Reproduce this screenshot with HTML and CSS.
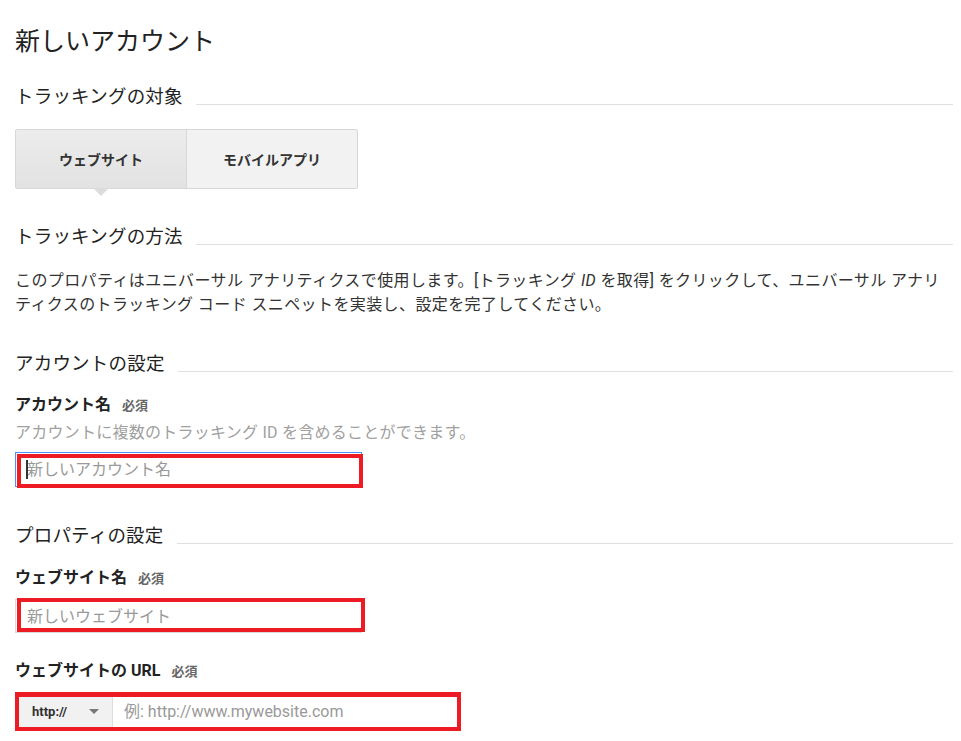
FILE: index.html
```html
<!DOCTYPE html>
<html lang="ja">

<head>
  <meta charset="UTF-8">
  <title>新しいアカウント</title>
  <link rel="stylesheet" href="styles.css">
</head>

<body>
  <div class='page'>
    <h1 class='title'>新しいアカウント</h1>

    <h2 class='section'>トラッキングの対象</h2>
    <div class='toggle'>
      <div class='opt active'>ウェブサイト</div>
      <div class='opt'>モバイルアプリ</div>
    </div>

    <h2 class='section gap-lg'>トラッキングの方法</h2>
    <p class='desc'>このプロパティはユニバーサル アナリティクスで使用します。[トラッキング <i>ID</i> を取得] をクリックして、ユニバーサル アナリティクスのトラッキング コード スニペットを実装し、設定を完了してください。</p>

    <h2 class='section gap-md'>アカウントの設定</h2>
    <div class='label'>アカウント名 <span class='req'>必須</span></div>
    <div class='hint'>アカウントに複数のトラッキング ID を含めることができます。</div>
    <div class='field first'>
      <input class='text focus' type='text' placeholder='新しいアカウント名'>
      <span class='caret'></span>
      <span class='mark m1'></span>
    </div>

    <h2 class='section gap-xl'>プロパティの設定</h2>
    <div class='label near'>ウェブサイト名 <span class='req'>必須</span></div>
    <div class='field second'>
      <input class='text' type='text' placeholder='新しいウェブサイト'>
      <span class='mark m2'></span>
    </div>

    <div class='label url-label'>ウェブサイトの URL <span class='req'>必須</span></div>
    <div class='url'>
      <div class='proto'>http:// <span class='arrow'></span></div>
      <input class='url-input' type='text' placeholder='例: http://www.mywebsite.com'>
      <span class='mark m3'></span>
    </div>
  </div>
</body>
</html>
```

FILE: styles.css
```css
body {
  margin: 0;
  background: #fff;
  font-family: Roboto, "Noto Sans CJK JP", sans-serif;
  color: #222;
}
.page {
  padding: 27px 8px 0 15px;
}
.title {
  margin: 0;
  font-size: 25px;
  font-weight: normal;
  line-height: 30px;
}
.section {
  display: flex;
  margin: 28px 0 0;
  font-size: 18.5px;
  font-weight: normal;
  line-height: 24px;
  letter-spacing: 0.2px;
  color: #222;
}
.section::after {
  content: '';
  flex: 1;
  height: 1px;
  margin: 0 0 4px 13px;
  align-self: flex-end;
  background: #e0e0e0;
}
.gap-lg { margin-top: 36px; }
.gap-md { margin-top: 35px; }
.gap-xl { margin-top: 37px; }

/* website / app switch */
.toggle {
  display: flex;
  width: 341px;
  height: 58px;
  margin-top: 20px;
  border: 1px solid #d8d8d8;
  border-radius: 2px;
  background: #f2f2f2;
}
.opt {
  flex: 1;
  display: flex;
  align-items: center;
  justify-content: center;
  font-size: 14px;
  font-weight: bold;
  color: #333;
}
.opt.active {
  position: relative;
  border-right: 1px solid #d8d8d8;
  background: linear-gradient(#ececec, #e2e2e2);
}
.opt.active::after {
  content: '';
  position: absolute;
  left: 50%;
  bottom: -8px;
  margin-left: -8px;
  border-left: 8px solid transparent;
  border-right: 8px solid transparent;
  border-top: 8px solid #dcdcdc;
}

.desc {
  margin: 20px 0 0;
  font-size: 16px;
  line-height: 24px;
  letter-spacing: 0.4px;
  color: #333;
}
.desc i { font-style: italic; }

.label {
  margin-top: 19px;
  font-size: 16px;
  font-weight: bold;
  line-height: 20px;
  color: #222;
}
.label.near { margin-top: 20px; }
.req {
  margin-left: 7px;
  font-size: 13px;
  color: #666;
}
.hint {
  margin-top: 5px;
  font-size: 16px;
  line-height: 24px;
  letter-spacing: 0.25px;
  color: #a0a0a0;
}
.field {
  position: relative;
  width: 347px;
}
.field.first { margin-top: 7px; }
.field.second { margin-top: 10px; }
.text {
  display: block;
  box-sizing: border-box;
  width: 100%;
  height: 34px;
  padding: 0 0 0 11px;
  border: 1px solid #d9d9d9;
  font-family: inherit;
  font-size: 16px;
  color: #222;
  outline: none;
}
.text.focus {
  height: 35px;
  border-color: #4d90fe;
}
.text::placeholder, .url-input::placeholder { color: #999; }
.caret {
  position: absolute;
  left: 11px;
  top: 8px;
  width: 2px;
  height: 19px;
  background: #333;
}

/* annotation boxes drawn over the fields */
.mark {
  position: absolute;
  border: 4px solid #ed1c24;
  pointer-events: none;
}
.m1 { left: 2px; top: 2px; right: -1px; bottom: -1px; }
.m2 { left: 2px; top: -1px; right: -3px; bottom: 1px; }
.m3 { left: 0; top: 0; right: 0; bottom: 0; border-width: 5px 4px 4px 4px; }

.url-label { margin-top: 28px; }
.url {
  position: relative;
  display: flex;
  width: 446px;
  height: 39px;
  margin-top: 10px;
}
.proto {
  display: flex;
  align-items: center;
  width: 80px;
  margin: 4px 0 4px 4px;
  padding-left: 13px;
  border-right: 1px solid #ddd;
  background: #f1f1f1;
  font-size: 13px;
  font-weight: bold;
  color: #333;
}
.arrow {
  margin-left: 22px;
  border-left: 5px solid transparent;
  border-right: 5px solid transparent;
  border-top: 5px solid #777;
}
.url-input {
  flex: 1;
  min-width: 0;
  border: none;
  padding: 0 0 0 11px;
  font-family: inherit;
  font-size: 16px;
  outline: none;
  background: transparent;
}
```
